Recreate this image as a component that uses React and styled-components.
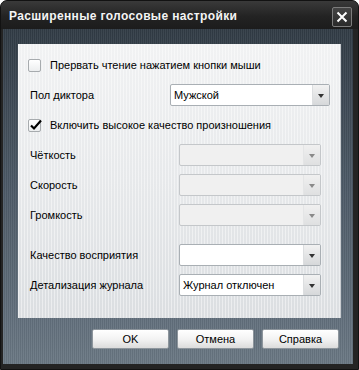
import React from "react";
import styled, { createGlobalStyle, css } from "styled-components";

const Global = createGlobalStyle`
  html, body { margin: 0; padding: 0; background: #ffffff; }
  body { font-family: "Liberation Sans", "DejaVu Sans", sans-serif; }
`;

const Window = styled.div`
  width: 359px;
  height: 370px;
  box-sizing: border-box;
  display: flex;
  flex-direction: column;
  background: #242424;
  border-radius: 7px 7px 0 0;
  border: 1px solid #121212;
  padding: 0 5px 5px 2px;
`;

const TitleBar = styled.div`
  height: 28px;
  display: flex;
  align-items: center;
  justify-content: space-between;
  background: linear-gradient(#3a3a3a, #232323 55%, #1c1c1c);
  margin: 0 -5px 0 -2px;
  padding-left: 8px;
  padding-right: 6px;
  border-radius: 6px 6px 0 0;
`;

const Title = styled.div`
  color: #f4f4f4;
  font-family: "Liberation Sans", "DejaVu Sans", sans-serif;
  font-weight: bold;
  font-size: 12px;
  letter-spacing: 0.35px;
  margin-top: 1px;
`;

const CloseButton = styled.div`
  width: 18px;
  height: 18px;
  border: 1px solid #7c7c7c;
  border-radius: 2px;
  background: linear-gradient(#444, #2a2a2a);
  display: flex;
  align-items: center;
  justify-content: center;
  margin-top: 3px;
`;

const Client = styled.div`
  flex: 1;
  display: flex;
  flex-direction: column;
  background:
    repeating-linear-gradient(90deg, rgba(255,255,255,0.05) 0 1px, rgba(0,0,0,0.05) 1px 2px),
    linear-gradient(#323c46, #4c5966 45%, #6a7884);
  padding: 15px 0 0 15px;
`;

const Panel = styled.div`
  width: 323px;
  height: 274px;
  box-sizing: border-box;
  padding: 6px 0 0 10px;
  display: flex;
  flex-direction: column;
  background:
    repeating-linear-gradient(90deg, rgba(255,255,255,0.45) 0 1px, rgba(255,255,255,0) 1px 3px),
    linear-gradient(#f1f2f3, #e7e9eb 50%, #dbdee1);
  border-right: 1px solid #c8ccd0;
`;

const Row = styled.div`
  height: 30px;
  display: flex;
  align-items: center;
  ${(p) => p.$spaced && css`margin-top: 10px;`}
`;

const Text = styled.span`
  font-family: "Liberation Sans", "DejaVu Sans", sans-serif;
  font-size: 11px;
  color: #000;
  white-space: nowrap;
`;

const Label = styled(Text)`
  width: 140px;
  padding-left: 2px;
  flex: none;
`;

const CheckLabel = styled(Text)`
  margin-left: 9px;
`;

const Box = styled.div`
  width: 11px;
  height: 11px;
  border: 1px solid #a7abae;
  border-radius: 2px;
  background: linear-gradient(#ffffff, #eceeef);
  position: relative;
  flex: none;
`;

const Tick = styled.svg`
  position: absolute;
  left: 0px;
  top: -2px;
`;

const Select = styled.div`
  height: 20px;
  width: ${(p) => p.$width}px;
  margin-left: ${(p) => p.$indent}px;
  border: 1px solid ${(p) => (p.$disabled ? "#c4c7ca" : "#a9afb4")};
  border-radius: 2px;
  background: ${(p) => (p.$disabled ? "#f0f0f0" : "#ffffff")};
  display: flex;
  align-items: center;
  flex: none;
`;

const SelectValue = styled(Text)`
  flex: 1;
  padding-left: 3px;
`;

const ArrowPart = styled.div`
  width: 16px;
  height: 100%;
  display: flex;
  align-items: center;
  justify-content: center;
  background: ${(p) =>
    p.$disabled
      ? "linear-gradient(#f0f0f0, #dfe0e1)"
      : "linear-gradient(#f2f2f2, #d6d8da)"};
  border-left: 1px solid ${(p) => (p.$disabled ? "#e4e5e6" : "#dcdee0")};
`;

const Arrow = styled.div`
  width: 0;
  height: 0;
  border-left: 3.5px solid transparent;
  border-right: 3.5px solid transparent;
  border-top: 4px solid ${(p) => (p.$disabled ? "#8a8a8a" : "#333")};
  margin-top: 1px;
`;

const ButtonRow = styled.div`
  display: flex;
  gap: 8px;
  padding-left: 74px;
  margin-top: 11px;
`;

const Button = styled.div`
  width: 75px;
  height: 18px;
  border: 1px solid #8d959c;
  border-radius: 2px;
  background: linear-gradient(#ffffff, #f3f3f3 50%, #dcdcdc);
  display: flex;
  align-items: center;
  justify-content: center;
  font-family: "Liberation Sans", "DejaVu Sans", sans-serif;
  font-size: 11px;
  color: #000;
`;

function CheckBox({ checked }) {
  return (
    <Box>
      {checked && (
        <Tick width="14" height="14" viewBox="0 0 14 14">
          <path d="M2 7.5 L5 10.5 L12 2.5" fill="none" stroke="#000" strokeWidth="2.2" />
        </Tick>
      )}
    </Box>
  );
}

function Dropdown({ value, width, indent, disabled }) {
  return (
    <Select $width={width} $indent={indent} $disabled={disabled}>
      <SelectValue>{value}</SelectValue>
      <ArrowPart $disabled={disabled}>
        <Arrow $disabled={disabled} />
      </ArrowPart>
    </Select>
  );
}

export default function App() {
  return (
    <>
      <Global />
      <Window>
        <TitleBar>
          <Title>Расширенные голосовые настройки</Title>
          <CloseButton>
            <svg width="12" height="12" viewBox="0 0 12 12">
              <path d="M1.5 1.5 L10.5 10.5 M10.5 1.5 L1.5 10.5" stroke="#fff" strokeWidth="2" />
            </svg>
          </CloseButton>
        </TitleBar>
        <Client>
          <Panel>
            <Row>
              <CheckBox />
              <CheckLabel>Прервать чтение нажатием кнопки мыши</CheckLabel>
            </Row>
            <Row>
              <Label>Пол диктора</Label>
              <Dropdown value="Мужской" width={158} indent={0} />
            </Row>
            <Row>
              <CheckBox checked />
              <CheckLabel>Включить высокое качество произношения</CheckLabel>
            </Row>
            <Row>
              <Label>Чёткость</Label>
              <Dropdown width={140} indent={9} disabled />
            </Row>
            <Row>
              <Label>Скорость</Label>
              <Dropdown width={140} indent={9} disabled />
            </Row>
            <Row>
              <Label>Громкость</Label>
              <Dropdown width={140} indent={9} disabled />
            </Row>
            <Row $spaced>
              <Label>Качество восприятия</Label>
              <Dropdown width={140} indent={9} />
            </Row>
            <Row>
              <Label>Детализация журнала</Label>
              <Dropdown value="Журнал отключен" width={140} indent={9} />
            </Row>
          </Panel>
          <ButtonRow>
            <Button>OK</Button>
            <Button>Отмена</Button>
            <Button>Справка</Button>
          </ButtonRow>
        </Client>
      </Window>
    </>
  );
}
